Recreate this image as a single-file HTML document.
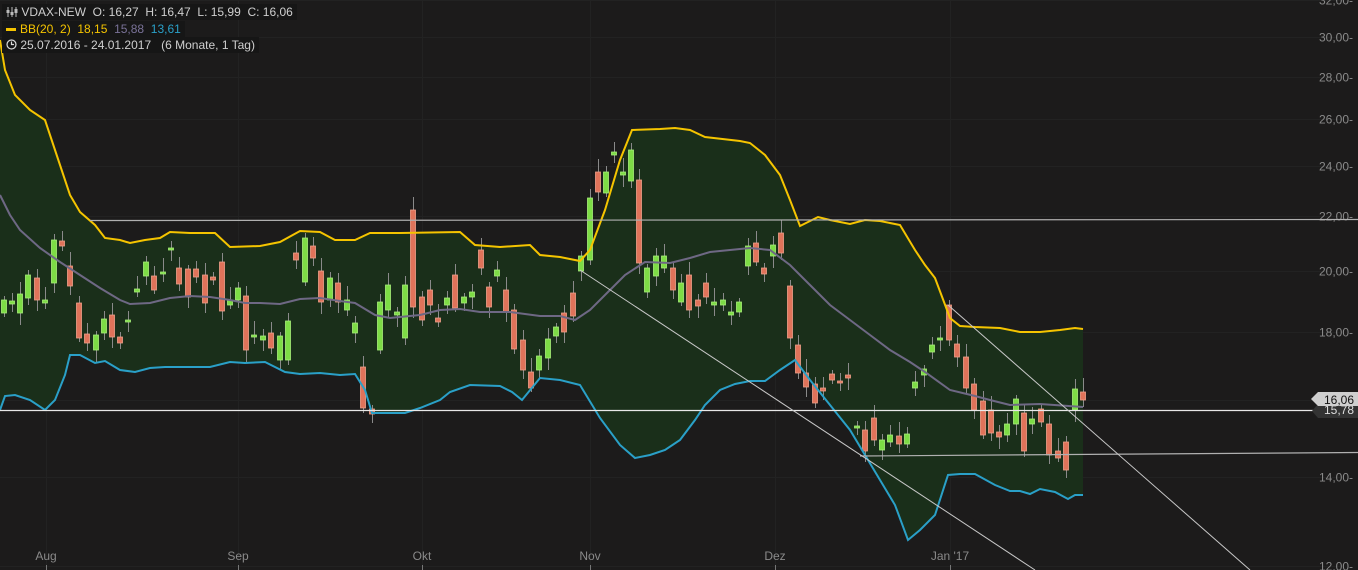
<!DOCTYPE html>
<html><head><meta charset="utf-8"><style>
html,body{margin:0;padding:0;background:#1c1b1b;}
body{width:1358px;height:570px;overflow:hidden;position:relative;font-family:"Liberation Sans",sans-serif;}
svg{position:absolute;left:0;top:0;}
.lg{position:absolute;left:2px;font-size:12px;color:#cfcfcf;background:#161616;padding:0 4px;height:16px;line-height:16px;white-space:nowrap;}
</style></head><body>
<svg id="s" width="1358" height="570" xmlns="http://www.w3.org/2000/svg"></svg>
<div class="lg" style="top:4px;"><svg width="12" height="10" style="position:static;vertical-align:-1px"><path d="M2 0v10M6 0v10M10 0v10" stroke="#bbb"/><rect x="0.5" y="3" width="3" height="3" fill="#bbb"/><rect x="4.5" y="5" width="3" height="3" fill="#bbb"/><rect x="8.5" y="2" width="3" height="4" fill="#bbb"/></svg> VDAX-NEW&nbsp; O: 16,27&nbsp; H: 16,47&nbsp; L: 15,99&nbsp; C: 16,06</div>
<div class="lg" style="top:21px;"><span style="display:inline-block;width:10px;height:3px;background:#f5c400;vertical-align:middle;margin-right:4px"></span><span style="color:#f5c400">BB(20, 2)&nbsp; 18,15</span>&nbsp; <span style="color:#7a7298">15,88</span>&nbsp; <span style="color:#2aa0c8">13,61</span></div>
<div class="lg" style="top:37px;"><svg width="11" height="11" style="position:static;vertical-align:-1px"><circle cx="5.5" cy="5.5" r="4.5" fill="none" stroke="#ddd" stroke-width="1.2"/><path d="M5.5 2.5v3h2.5" fill="none" stroke="#ddd" stroke-width="1.2"/></svg> 25.07.2016 - 24.01.2017&nbsp;&nbsp; (6 Monate, 1 Tag)</div>
<script>
var s=document.getElementById('s'),h='';
function yp(p){return 2001-577.5*Math.log(p);}
[12,14,16,18,20,22,24,26,28,30,32].forEach(function(p){var y=Math.round(yp(p))+.5;h+='<line x1="0" x2="1340" y1="'+y+'" y2="'+y+'" stroke="#222"/>';
if(p!=16)h+='<text x="1353" y="'+(y+4)+'" fill="#8a8a8a" font-size="12" text-anchor="end" font-family="Liberation Sans">'+p+',00-</text>';});
[[46,'Aug'],[238,'Sep'],[422,'Okt'],[590,'Nov'],[775,'Dez'],[950,'Jan \'17']].forEach(function(a){h+='<line x1="'+a[0]+'.5" x2="'+a[0]+'.5" y1="0" y2="570" stroke="#222"/><line x1="'+a[0]+'.5" x2="'+a[0]+'.5" y1="565" y2="570" stroke="#777"/><text x="'+a[0]+'" y="560" fill="#8a8a8a" font-size="12" text-anchor="middle" font-family="Liberation Sans">'+a[1]+'</text>';});
var U=[[0,40],[5,70],[15,95],[30,110],[45,120],[50,135],[60,165],[70,195],[80,212],[95,225],[105,238],[120,240],[130,243],[145,240],[160,238],[170,232],[190,233],[215,233],[230,247],[260,246],[280,242],[300,231],[320,232],[335,240],[355,240],[370,233],[400,233],[460,232],[475,245],[500,247],[530,245],[540,255],[560,257],[580,261],[590,250],[605,210],[620,160],[632,130],[660,129],[675,128],[690,130],[705,137],[740,141],[750,143],[765,155],[780,175],[790,200],[800,226],[818,217],[830,220],[850,224],[865,220],[880,221],[900,225],[915,250],[925,265],[935,278],[950,318],[960,326],[975,327],[1000,328],[1020,332],[1040,332],[1060,330],[1075,328],[1083,329]];
var M=[[0,195],[10,215],[20,230],[40,248],[60,262],[80,275],[100,288],[120,300],[130,304],[150,303],[170,298],[190,296],[210,297],[230,300],[245,303],[260,303],[280,304],[300,299],[320,298],[340,301],[355,303],[375,315],[390,318],[420,315],[440,310],[460,309],[480,312],[510,312],[540,316],[560,316],[575,320],[590,310],[610,290],[625,275],[645,262],[670,263],[690,258],[710,252],[750,248],[770,250],[790,265],[810,285],[830,305],[850,320],[870,335],[890,350],[910,362],[925,372],[950,390],[975,396],[990,400],[1010,405],[1040,404],[1083,407]];
var L=[[0,410],[5,396],[15,395],[30,400],[45,410],[55,400],[65,375],[70,355],[80,355],[95,363],[105,361],[120,370],[135,372],[150,368],[165,367],[210,367],[230,362],[245,363],[265,362],[285,372],[300,374],[320,373],[340,375],[355,374],[365,390],[372,413],[405,413],[420,408],[440,400],[450,392],[470,385],[500,386],[512,392],[522,400],[540,378],[560,380],[580,385],[600,418],[620,445],[635,458],[650,455],[665,450],[680,440],[695,420],[705,405],[720,390],[735,384],[750,381],[765,381],[780,370],[795,360],[810,380],[830,405],[850,430],[865,455],[880,480],[895,505],[908,540],[920,530],[935,515],[948,475],[960,474],[975,474],[995,485],[1010,491],[1020,491],[1030,494],[1040,489],[1055,492],[1068,499],[1075,495],[1083,495]];
function pts(a){return a.map(function(p){return p[0]+','+p[1];}).join(' ');}
h+='<polygon points="'+pts(U)+' '+pts(L.slice().reverse())+'" fill="#1a2f1a"/>';
var C=[[4,'g',300,313],[12,'g',301,304],[20,'g',294,313],[28,'g',275,298],[37,'r',278,300],[45,'g',300,303],[54,'g',240,283],[62,'r',241,246],[70,'r',266,286],[79,'r',303,338],[87,'r',334,343],[96,'g',335,350],[104,'g',319,333],[112,'r',315,337],[120,'r',337,343],[128,'g',320,322],[137,'g',289,292],[146,'g',262,276],[154,'r',276,290],[163,'g',272,274],[171,'g',248,249],[179,'r',268,284],[188,'r',269,297],[196,'r',269,277],[205,'r',275,303],[213,'r',277,280],[222,'r',262,311],[230,'g',300,305],[238,'g',288,300],[246,'r',296,350],[254,'g',335,337],[263,'g',336,340],[271,'r',333,348],[280,'g',336,360],[288,'g',321,360],[296,'r',253,260],[305,'g',238,282],[313,'r',246,258],[321,'r',271,302],[330,'g',278,300],[338,'r',283,302],[347,'g',300,310],[355,'g',323,333],[363,'r',367,408],[372,'r',409,414],[380,'g',302,350],[388,'g',285,310],[397,'g',312,315],[405,'g',285,338],[413,'r',210,307],[422,'r',297,320],[430,'r',290,305],[438,'r',318,322],[447,'g',298,305],[455,'r',275,308],[464,'g',297,303],[472,'g',292,297],[481,'r',250,268],[489,'r',287,307],[497,'g',270,276],[506,'r',290,312],[514,'r',310,349],[523,'r',340,370],[531,'r',372,388],[539,'g',356,370],[548,'g',339,358],[556,'g',327,336],[564,'r',313,332],[573,'r',293,316],[581,'g',256,271],[590,'g',198,260],[598,'r',172,192],[606,'g',172,193],[614,'g',152,155],[623,'g',172,175],[631,'g',150,181],[639,'r',180,263],[647,'g',268,292],[656,'g',256,276],[664,'g',256,268],[673,'r',268,290],[681,'g',283,302],[689,'r',275,310],[698,'r',300,306],[706,'r',283,297],[714,'g',302,305],[723,'g',300,305],[731,'g',312,315],[739,'g',302,312],[748,'g',246,266],[756,'r',243,262],[764,'r',268,274],[773,'g',245,256],[781,'r',233,253],[790,'r',286,338],[798,'r',345,373],[806,'r',373,387],[815,'r',384,403],[823,'r',388,391],[832,'r',374,380],[840,'r',381,383],[848,'r',375,378],[857,'g',426,428],[865,'r',430,451],[874,'r',418,440],[882,'g',440,450],[890,'g',435,442],[899,'r',436,444],[907,'g',434,444],[915,'g',382,388],[924,'g',369,375],[932,'g',345,352],[940,'g',338,340],[949,'r',305,340],[957,'r',344,357],[966,'r',357,388],[974,'r',384,410],[983,'r',401,435],[991,'r',410,433],[999,'r',432,437],[1007,'g',424,435],[1016,'g',399,424],[1024,'r',413,451],[1032,'g',419,424],[1041,'r',409,422],[1049,'r',424,455],[1058,'r',451,458],[1066,'r',442,470],[1075,'g',389,410],[1083,'r',392,400]];
C.forEach(function(c,i){var x=c[0],t=c[2],b=c[3],w=(i*37)%11;
h+='<line x1="'+x+'.5" x2="'+x+'.5" y1="'+(t-4-w)+'" y2="'+(b+4+(i*13)%9)+'" stroke="#8a8a8a"/>';
var f=c[1]=='g'?'#7ddc45':'#e0735a',st=c[1]=='g'?'#a8f07a':'#f0a08a';
h+='<rect x="'+(x-2.5)+'" y="'+t+'" width="5" height="'+Math.max(2,b-t)+'" fill="'+f+'" stroke="'+st+'" stroke-width="0.8"/>';});
h+='<polyline points="'+pts(U)+'" fill="none" stroke="#f5c400" stroke-width="2"/>';
h+='<polyline points="'+pts(M)+'" fill="none" stroke="#6e6884" stroke-width="2"/>';
h+='<polyline points="'+pts(L)+'" fill="none" stroke="#2aa0c8" stroke-width="2"/>';
h+='<line x1="90" y1="220.5" x2="1358" y2="219.5" stroke="#b0b0b0" stroke-width="1.2"/>';
h+='<line x1="0" y1="410.5" x2="1358" y2="410.5" stroke="#e8e8e8" stroke-width="1.2"/>';
h+='<line x1="860" y1="456" x2="1358" y2="452.5" stroke="#b0b0b0" stroke-width="1.2"/>';
h+='<line x1="580" y1="270" x2="1035" y2="570" stroke="#c8c8c8" stroke-width="1"/>';
h+='<line x1="948" y1="305" x2="1250" y2="570" stroke="#c8c8c8" stroke-width="1"/>';
h+='<polygon points="1312,411 1318,404 1358,404 1358,418 1318,418" fill="#333"/><text x="1354" y="414" fill="#ddd" font-size="12" text-anchor="end" font-family="Liberation Sans">15,78</text>';
h+='<polygon points="1311,399 1318,392 1358,392 1358,406 1318,406" fill="#cfcfcf"/><text x="1354" y="404" fill="#111" font-size="12" text-anchor="end" font-family="Liberation Sans">16,06</text>';
s.innerHTML=h;
</script>
</body></html>
